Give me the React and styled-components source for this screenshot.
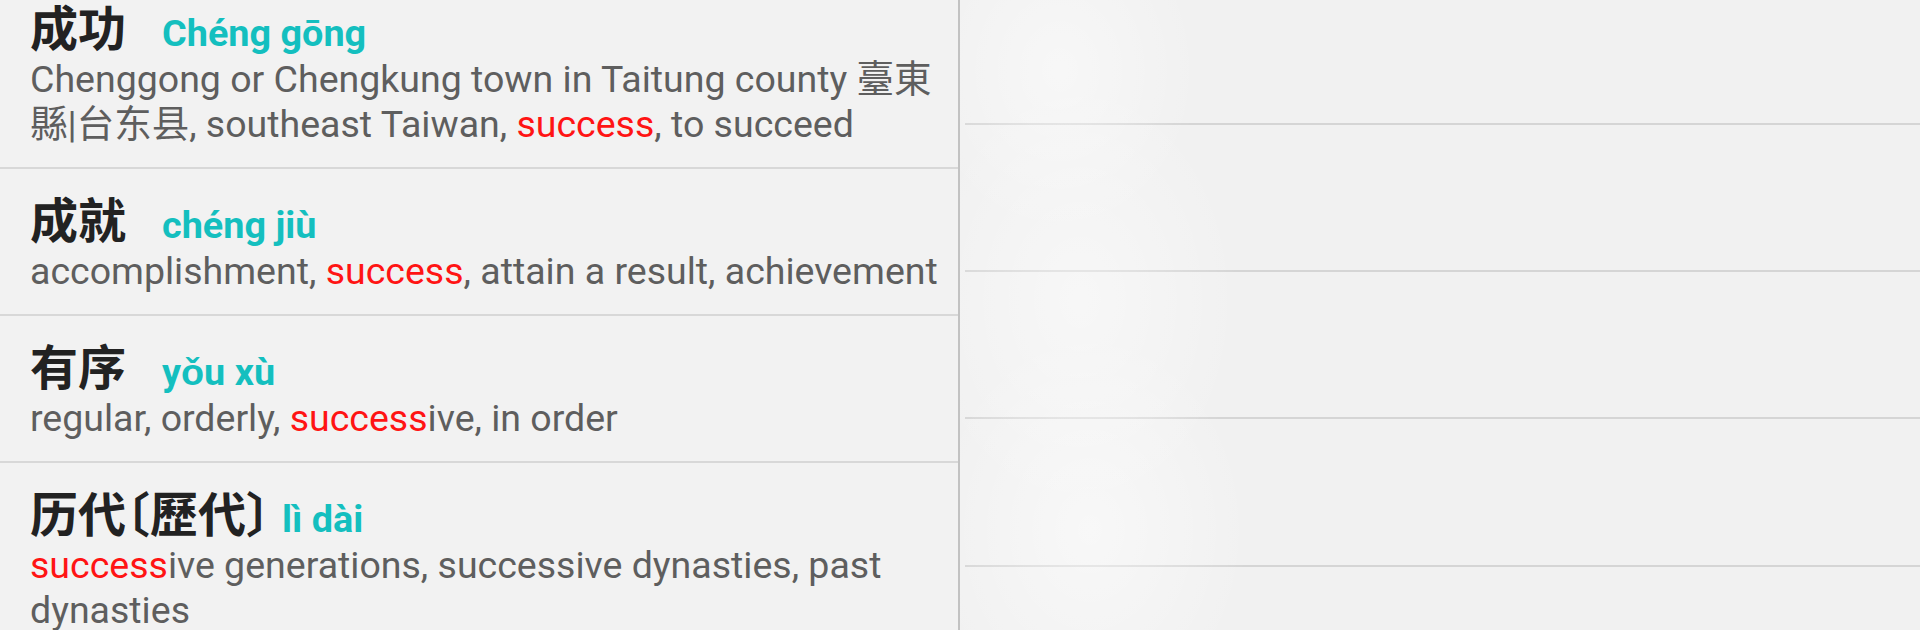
import React from "react";
import styled, { createGlobalStyle } from "styled-components";

const Global = createGlobalStyle`
  html, body { margin: 0; padding: 0; background: #f2f2f2; }
  body {
    width: 1920px;
    height: 630px;
    overflow: hidden;
    font-family: Roboto, "Noto Sans CJK SC", sans-serif;
  }
`;

const Screen = styled.div`
  display: flex;
  width: 1920px;
  height: 630px;
  overflow: hidden;
  background: #f2f2f2;
`;

const ListPane = styled.div`
  flex: none;
  width: 958px;
  height: 630px;
  overflow: hidden;
  border-right: 2px solid #c2c2c2;
  box-sizing: content-box;
`;

const List = styled.div`
  margin-top: -23px;
`;

const Entry = styled.div`
  padding: 23px 10px 20px 30px;
  border-bottom: 2px solid #d8d8d8;
`;

const Header = styled.div`
  display: flex;
  align-items: baseline;
  font-family: Roboto, sans-serif;
  font-size: 37px;
  line-height: 50px;
`;

const Headword = styled.span`
  min-width: 120px;
  margin-right: 12px;
  font-family: "Noto Sans CJK SC", "Noto Sans CJK TC", sans-serif;
  font-size: 48px;
  line-height: 50px;
  font-weight: 700;
  color: #222222;
  font-feature-settings: "halt";
`;

const Pinyin = styled.span`
  font-family: Roboto, sans-serif;
  font-size: 37.8px;
  line-height: 50px;
  font-weight: 700;
  color: #14bfbf;
`;

const Definition = styled.div`
  margin-top: -1px;
  font-family: Roboto, "Noto Sans CJK SC", "Noto Sans CJK TC", sans-serif;
  font-size: 37.5px;
  line-height: 45px;
  color: #5e5e5e;
`;

const Hit = styled.span`
  color: #ff1414;
`;

const DetailPane = styled.div`
  position: relative;
  flex: 1;
  height: 630px;
  overflow: hidden;
  background: #f1f1f1;

  &::after {
    content: "";
    position: absolute;
    inset: 0;
    pointer-events: none;
    background:
      radial-gradient(ellipse 140px 170px at 100px 70px, rgba(255,255,255,0.45), rgba(255,255,255,0) 100%),
      radial-gradient(ellipse 160px 220px at 120px 300px, rgba(255,255,255,0.45), rgba(255,255,255,0) 100%),
      radial-gradient(ellipse 160px 200px at 130px 530px, rgba(255,255,255,0.5), rgba(255,255,255,0) 100%);
  }
`;

const Slot = styled.div`
  height: ${(p) => p.$h}px;
  margin-left: 5px;
  border-bottom: 2px solid #d5d5d5;
`;

const entries = [
  {
    hw: "成功",
    py: "Chéng gōng",
    def: [
      "Chenggong or Chengkung town in Taitung county 臺東縣|台东县, southeast Taiwan, ",
      { hit: "success" },
      ", to succeed",
    ],
  },
  {
    hw: "成就",
    py: "chéng jiù",
    def: ["accomplishment, ", { hit: "success" }, ", attain a result, achievement"],
  },
  {
    hw: "有序",
    py: "yǒu xù",
    def: ["regular, orderly, ", { hit: "success" }, "ive, in order"],
  },
  {
    hw: "历代〔歷代〕",
    py: "lì dài",
    def: [{ hit: "success" }, "ive generations, successive dynasties, past dynasties"],
  },
];

export default function App() {
  return (
    <>
      <Global />
      <Screen>
        <ListPane>
          <List>
            {entries.map((e) => (
              <Entry key={e.hw}>
                <Header>
                  <Headword>{e.hw}</Headword>
                  <Pinyin>{e.py}</Pinyin>
                </Header>
                <Definition>
                  {e.def.map((part, i) =>
                    typeof part === "string" ? (
                      <React.Fragment key={i}>{part}</React.Fragment>
                    ) : (
                      <Hit key={i}>{part.hit}</Hit>
                    )
                  )}
                </Definition>
              </Entry>
            ))}
          </List>
        </ListPane>
        <DetailPane>
          <Slot $h={123} />
          <Slot $h={145} />
          <Slot $h={145} />
          <Slot $h={146} />
          <Slot $h={145} />
        </DetailPane>
      </Screen>
    </>
  );
}
